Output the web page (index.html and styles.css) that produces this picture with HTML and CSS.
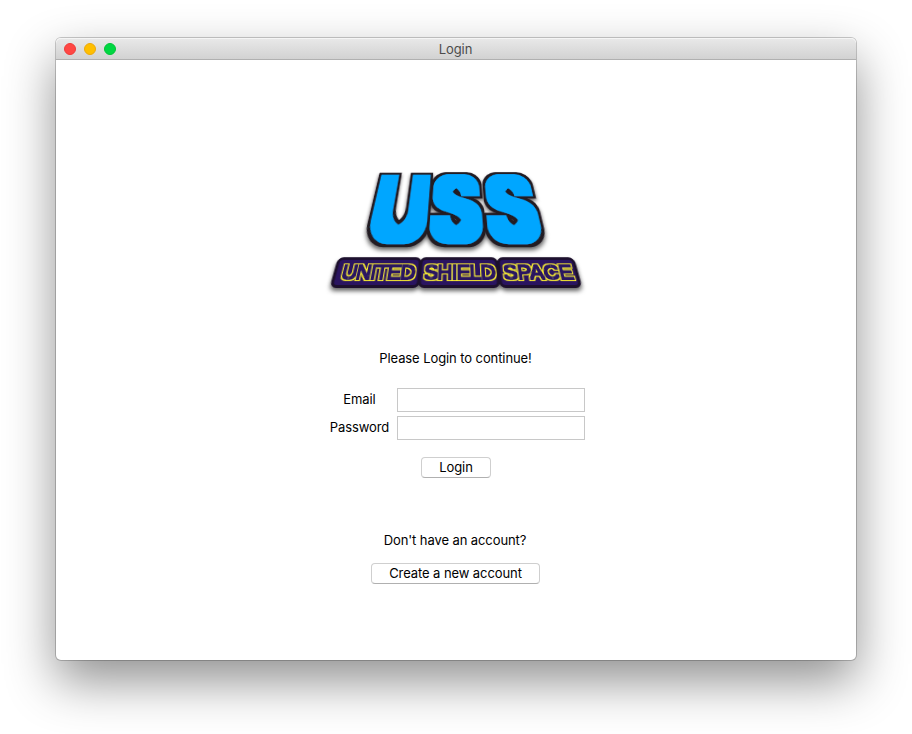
FILE: index.html
```html
<!DOCTYPE html>
<html lang="en">
<head>
<meta charset="utf-8">
<title>Login</title>
<link rel="stylesheet" href="styles.css">
</head>
<body>
<main class="window">
  <header class="titlebar">
    <div class="lights"><i class="light close"></i><i class="light minimize"></i><i class="light maximize"></i></div>
    <h1 class="title">Login</h1>
  </header>
  <section class="content">
    <div class="logo">
      <svg class="logo-main" width="184" height="92" viewBox="0 0 184 92">
        <defs>
          <filter id="block" filterUnits="userSpaceOnUse" x="-10" y="-14" width="204" height="116">
            <feMorphology in="SourceAlpha" operator="dilate" radius="8 6" result="fat"/>
            <feMorphology in="fat" operator="dilate" radius="3 3" result="edge"/>
            <feFlood flood-color="#211a24"/>
            <feComposite in2="edge" operator="in" result="dark"/>
            <feFlood flood-color="#00a6ff"/>
            <feComposite in2="fat" operator="in" result="blue"/>
            <feMerge><feMergeNode in="dark"/><feMergeNode in="blue"/></feMerge>
          </filter>
        </defs>
        <g filter="url(#block)">
          <g transform="scale(.8 1)">
            <text x="40 116.5 193" y="82" text-anchor="middle">USS</text>
          </g>
        </g>
      </svg>
      <svg class="logo-sub" width="252" height="33" viewBox="0 0 252 33">
        <defs>
          <filter id="neon" filterUnits="userSpaceOnUse" x="0" y="0" width="252" height="33">
            <feMorphology in="SourceAlpha" operator="dilate" radius="2 2" result="outer"/>
            <feMorphology in="SourceAlpha" operator="dilate" radius="1 1" result="inner"/>
            <feFlood flood-color="#fff22e"/>
            <feComposite in2="outer" operator="in" result="yellow"/>
            <feFlood flood-color="#2a1460"/>
            <feComposite in2="inner" operator="in" result="purple"/>
            <feMerge><feMergeNode in="yellow"/><feMergeNode in="purple"/></feMerge>
          </filter>
        </defs>
        <g class="plates">
          <rect x="1" y="1.5" width="87" height="30" rx="5"/>
          <rect x="89" y="1.5" width="80" height="30" rx="5"/>
          <rect x="171" y="1.5" width="80" height="30" rx="5"/>
        </g>
        <g class="words" filter="url(#neon)">
          <text x="8" y="24.5" textLength="76" lengthAdjust="spacing">UNITED</text>
          <text x="93" y="24.5" textLength="74" lengthAdjust="spacing">SHIELD</text>
          <text x="175" y="24.5" textLength="72" lengthAdjust="spacing">SPACE</text>
        </g>
      </svg>
    </div>
    <p class="prompt">Please Login to continue!</p>
    <form class="form">
      <label for="email">Email</label><input id="email" type="text">
      <label for="password">Password</label><input id="password" type="password">
    </form>
    <button class="button login" type="button">Login</button>
    <p class="signup">Don't have an account?</p>
    <button class="button create" type="button">Create a new account</button>
  </section>
</main>
</body>
</html>
```
FILE: styles.css
```css
* { box-sizing: border-box; }
body {
  margin: 0;
  padding: 38px 56px 0;
  height: 734px;
  overflow: hidden;
  background: #fff;
  color: #000;
  font: 13px/16px Inter, "Liberation Sans", sans-serif;
  letter-spacing: -.09px;
}
.window {
  width: 800px;
  height: 622px;
  border-radius: 5px;
  background: #fff;
  box-shadow: 0 0 0 1px rgba(0,0,0,.2), 0 21px 50px rgba(0,0,0,.44);
}
.titlebar {
  display: grid;
  grid-template-columns: 1fr auto 1fr;
  align-items: center;
  height: 22px;
  padding: 0 8px;
  border-bottom: 1px solid #b0b0b0;
  border-radius: 5px 5px 0 0;
  background: linear-gradient(#e9e9e9, #d2d2d2);
  box-shadow: inset 0 1px #f5f5f5;
}
.lights { display: flex; gap: 8px; }
.light { width: 12px; height: 12px; border-radius: 50%; border: 1px solid; }
.close { background: #ff4744; border-color: #f03b38; }
.minimize { background: #ffbf00; border-color: #eda90b; }
.maximize { background: #00d742; border-color: #00c436; }
.title { margin: 1px 1px 0 0; font-size: 13px; font-weight: 400; color: #4c4c4c; }
.content {
  display: flex;
  flex-direction: column;
  align-items: center;
  padding-top: 93px;
}
.logo {
  display: flex;
  flex-direction: column;
  align-items: center;
  width: 252px;
  height: 137px;
}
.logo svg { display: block; flex: none; overflow: visible; transform-origin: 50% 100%; }
.logo-main {
  margin-top: 2px;
  margin-right: 2px;
  transform: matrix3d(1,0,0,0, 0,1,0,-.00257, 0,0,1,0, 0,0,0,1);
  filter: drop-shadow(0 3px 2px rgba(0,0,0,.6));
}
.logo-main text { font: 300 100px Inter, sans-serif; letter-spacing: 0; }
.logo-sub {
  margin-top: 8px;
  transform: matrix3d(1,0,0,0, 0,1,0,-.0022, 0,0,1,0, 0,0,0,1);
  filter: drop-shadow(0 3px 2px rgba(0,0,0,.6));
}
.plates { fill: #2a1460; stroke: #1d102d; stroke-width: 3px; }
.words text { font: 400 22px "Liberation Sans", sans-serif; }
p { margin: 0; }
.prompt { margin-top: 60px; margin-right: 1px; }
.form {
  display: grid;
  grid-template-columns: 59px 188px;
  column-gap: 8px;
  row-gap: 4px;
  align-items: center;
  justify-items: center;
  margin-top: 22px;
  padding-left: 3px;
}
.form label { margin-bottom: 2px; }
.form input {
  width: 188px;
  height: 24px;
  border: 1px solid #c8c8c8;
  background: #fff;
  outline: 0;
}
.button {
  height: 21px;
  padding: 0 0 1px;
  border: 1px solid #cfcfcf;
  border-bottom-color: #b0b0b0;
  border-radius: 4px;
  background: #fff;
  color: #000;
  font: inherit;
  letter-spacing: inherit;
}
.login { width: 70px; margin-top: 17px; }
.signup { margin-top: 54px; margin-right: 2px; }
.create { width: 169px; margin-top: 15px; margin-right: 1px; }
```
